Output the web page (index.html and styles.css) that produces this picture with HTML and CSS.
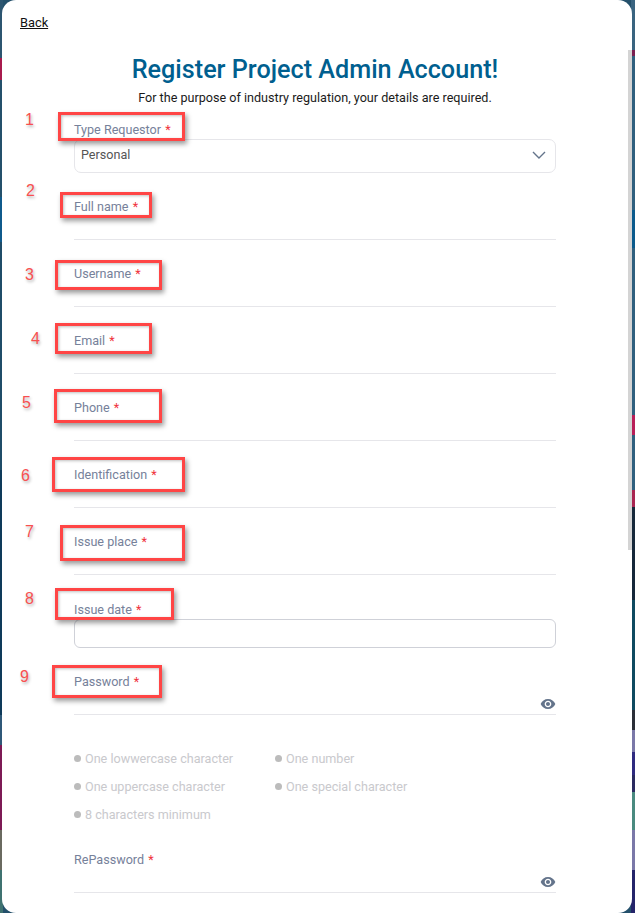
FILE: index.html
```html
<!DOCTYPE html>
<html>
  <head>
    <title>Register Project Admin Account</title>
    <link rel="stylesheet" href="styles.css">
  </head>
  <body>
    <div class="modal">
      <a href="#" class="back-link">Back</a>
      <h1>Register Project Admin Account!</h1>
      <p class="subtitle">For the purpose of industry regulation, your details are required.</p>

      <form class="form">
        <div class="field">
          <label>Type Requestor <span class="req">*</span></label>
          <div class="select-box">
            <span>Personal</span>
            <svg width="14" height="8" viewBox="0 0 14 8"><path d="M1 1l6 6 6-6" fill="none" stroke="#64748b" stroke-width="1.4"/></svg>
          </div>
        </div>
        <div class="field">
          <label>Full name <span class="req">*</span></label>
          <input type="text" class="line-input">
        </div>
        <div class="field">
          <label>Username <span class="req">*</span></label>
          <input type="text" class="line-input">
        </div>
        <div class="field">
          <label>Email <span class="req">*</span></label>
          <input type="text" class="line-input">
        </div>
        <div class="field">
          <label>Phone <span class="req">*</span></label>
          <input type="text" class="line-input">
        </div>
        <div class="field">
          <label>Identification <span class="req">*</span></label>
          <input type="text" class="line-input">
        </div>
        <div class="field">
          <label>Issue place <span class="req">*</span></label>
          <input type="text" class="line-input">
        </div>
        <div class="field field-date">
          <label>Issue date <span class="req">*</span></label>
          <input type="text" class="date-input">
        </div>
        <div class="field">
          <label>Password <span class="req">*</span></label>
          <div class="password-box">
            <svg width="16" height="16" viewBox="0 0 24 24"><path fill="#64748b" d="M12 4.5C7 4.5 2.73 7.61 1 12c1.73 4.39 6 7.5 11 7.5s9.27-3.11 11-7.5c-1.73-4.39-6-7.5-11-7.5zM12 17c-2.76 0-5-2.24-5-5s2.24-5 5-5 5 2.24 5 5-2.24 5-5 5zm0-8c-1.66 0-3 1.34-3 3s1.34 3 3 3 3-1.34 3-3-1.34-3-3-3z"/></svg>
          </div>
        </div>

        <ul class="rules">
          <li>One lowwercase character</li>
          <li>One number</li>
          <li>One uppercase character</li>
          <li>One special character</li>
          <li>8 characters minimum</li>
        </ul>

        <div class="field">
          <label>RePassword <span class="req">*</span></label>
          <div class="password-box">
            <svg width="16" height="16" viewBox="0 0 24 24"><path fill="#64748b" d="M12 4.5C7 4.5 2.73 7.61 1 12c1.73 4.39 6 7.5 11 7.5s9.27-3.11 11-7.5c-1.73-4.39-6-7.5-11-7.5zM12 17c-2.76 0-5-2.24-5-5s2.24-5 5-5 5 2.24 5 5-2.24 5-5 5zm0-8c-1.66 0-3 1.34-3 3s1.34 3 3 3 3-1.34 3-3-1.34-3-3-3z"/></svg>
          </div>
        </div>
      </form>

      <div class="scrollbar"></div>
    </div>

    <!-- review marks drawn over the screenshot -->
    <div class="mark box-1"></div>
    <div class="mark box-2"></div>
    <div class="mark box-3"></div>
    <div class="mark box-4"></div>
    <div class="mark box-5"></div>
    <div class="mark box-6"></div>
    <div class="mark box-7"></div>
    <div class="mark box-8"></div>
    <div class="mark box-9"></div>
    <span class="num num-1">1</span>
    <span class="num num-2">2</span>
    <span class="num num-3">3</span>
    <span class="num num-4">4</span>
    <span class="num num-5">5</span>
    <span class="num num-6">6</span>
    <span class="num num-7">7</span>
    <span class="num num-8">8</span>
    <span class="num num-9">9</span>
  </body>
</html>
```

FILE: styles.css
```css
body {
  font-family: Roboto, Arial, sans-serif;
  margin: 0;
  height: 913px;
  overflow: hidden;
  position: relative;
  background-color: #24506b;
  background-image:
    linear-gradient(
      #2c5570 0 58px,
      #a81b4d 58px 80px,
      #24506b 80px 197px,
      #0f5a8c 197px 242px,
      #1f4c68 242px 470px,
      #0e3a5a 470px 715px,
      #2f5878 715px 745px,
      #7d1a55 745px 830px,
      #6a6a60 830px 870px,
      #3f7270 870px
    ),
    linear-gradient(
      #3a6480 0 50px,
      #7a1f50 50px 56px,
      #2f5f7e 56px 210px,
      #0b5a8c 210px 248px,
      #2f5f7e 248px 415px,
      #b81f58 415px 435px,
      #2f5f7e 435px 490px,
      #a82550 490px 507px,
      #16283a 507px 600px,
      #0f4a60 600px 710px,
      #2a2f38 710px 730px,
      #7a78a8 730px 752px,
      #2f2a80 752px 775px,
      #2a2a60 775px 792px,
      #4a8a80 792px 830px,
      #7a78a8 830px 870px,
      #24246a 870px
    );
  background-size: 3px 913px, 4px 913px;
  background-position: left top, right top;
  background-repeat: no-repeat;
}

.modal {
  position: relative;
  box-sizing: border-box;
  height: 913px;
  margin: 0 3px 0 2px;
  padding: 15px 0 0 18px;
  background: #fff;
  border-radius: 14px;
}

.back-link {
  display: block;
  width: max-content;
  font-size: 12.8px;
  line-height: 15px;
  color: #111;
}

h1 {
  margin: 23px 0 0 0;
  padding-right: 22px;
  text-align: center;
  font-size: 25.2px;
  line-height: 34px;
  font-weight: 500;
  color: #005f8f;
}

.subtitle {
  margin: 2px 0 0 0;
  padding-right: 22px;
  text-align: center;
  font-size: 12.6px;
  line-height: 18px;
  color: #1a1a1a;
}

.form {
  width: 482px;
  margin: 12px 0 0 54px;
}

.field {
  margin-bottom: 23px;
}

.field-date {
  margin-top: 24px;
}

.field label {
  display: block;
  padding-top: 2px;
  font-size: 12.6px;
  line-height: 18px;
  color: #76819a;
}

.req {
  color: #f0323c;
  margin-left: 1px;
}

.select-box {
  box-sizing: border-box;
  display: flex;
  align-items: center;
  justify-content: space-between;
  height: 34px;
  padding: 0 9px 3px 6px;
  border: 1px solid #e6e6ea;
  border-radius: 7px;
  font-size: 12.6px;
  color: #555;
}

.line-input {
  display: block;
  box-sizing: border-box;
  width: 100%;
  height: 24px;
  padding: 0;
  border: none;
  border-bottom: 1px solid #e6e6ea;
  outline: none;
}

.date-input {
  display: block;
  box-sizing: border-box;
  width: 100%;
  height: 29px;
  padding: 0 7px;
  border: 1px solid #cfd1d8;
  border-radius: 6px;
  outline: none;
}

.password-box {
  box-sizing: border-box;
  display: flex;
  justify-content: flex-end;
  align-items: flex-end;
  height: 24px;
  padding-bottom: 2px;
  border-bottom: 1px solid #e6e6ea;
}

.rules {
  display: grid;
  grid-template-columns: 201px 1fr;
  grid-auto-rows: 28px;
  list-style: none;
  margin: -15px 0 21px 0;
  padding: 21px 0 0 0;
  font-size: 12.6px;
  color: #c9c9cd;
}

.rules li {
  display: flex;
  align-items: center;
  gap: 4px;
}

.rules li::before {
  content: "";
  flex-shrink: 0;
  width: 7px;
  height: 7px;
  border-radius: 50%;
  background: #bcbcbc;
}

.scrollbar {
  position: absolute;
  top: 50px;
  right: 0;
  width: 4px;
  height: 500px;
  background: #d4d4d4;
}

.mark {
  position: absolute;
  box-sizing: border-box;
  border: 3px solid #ff4545;
  box-shadow: 2px 3px 5px rgba(0, 0, 0, 0.4), inset 1px 1px 3px rgba(0, 0, 0, 0.25);
}

.box-1 { left: 58px; top: 112px; width: 127px; height: 29px; }
.box-2 { left: 60px; top: 192px; width: 92px; height: 26px; }
.box-3 { left: 55px; top: 260px; width: 107px; height: 30px; }
.box-4 { left: 55px; top: 323px; width: 97px; height: 31px; }
.box-5 { left: 54px; top: 389px; width: 108px; height: 34px; }
.box-6 { left: 52px; top: 457px; width: 133px; height: 35px; }
.box-7 { left: 60px; top: 525px; width: 125px; height: 36px; }
.box-8 { left: 55px; top: 588px; width: 119px; height: 32px; }
.box-9 { left: 52px; top: 665px; width: 110px; height: 33px; }

.num {
  position: absolute;
  font-family: "Liberation Sans", Arial, sans-serif;
  font-size: 16px;
  line-height: 18px;
  color: #f85050;
  text-shadow: 1px 2px 3px rgba(0, 0, 0, 0.3);
}

.num-1 { left: 25px; top: 111px; }
.num-2 { left: 26px; top: 182px; }
.num-3 { left: 25px; top: 266px; }
.num-4 { left: 31px; top: 330px; }
.num-5 { left: 22px; top: 394px; }
.num-6 { left: 21px; top: 467px; }
.num-7 { left: 25px; top: 523px; }
.num-8 { left: 25px; top: 590px; }
.num-9 { left: 20px; top: 668px; }
```
